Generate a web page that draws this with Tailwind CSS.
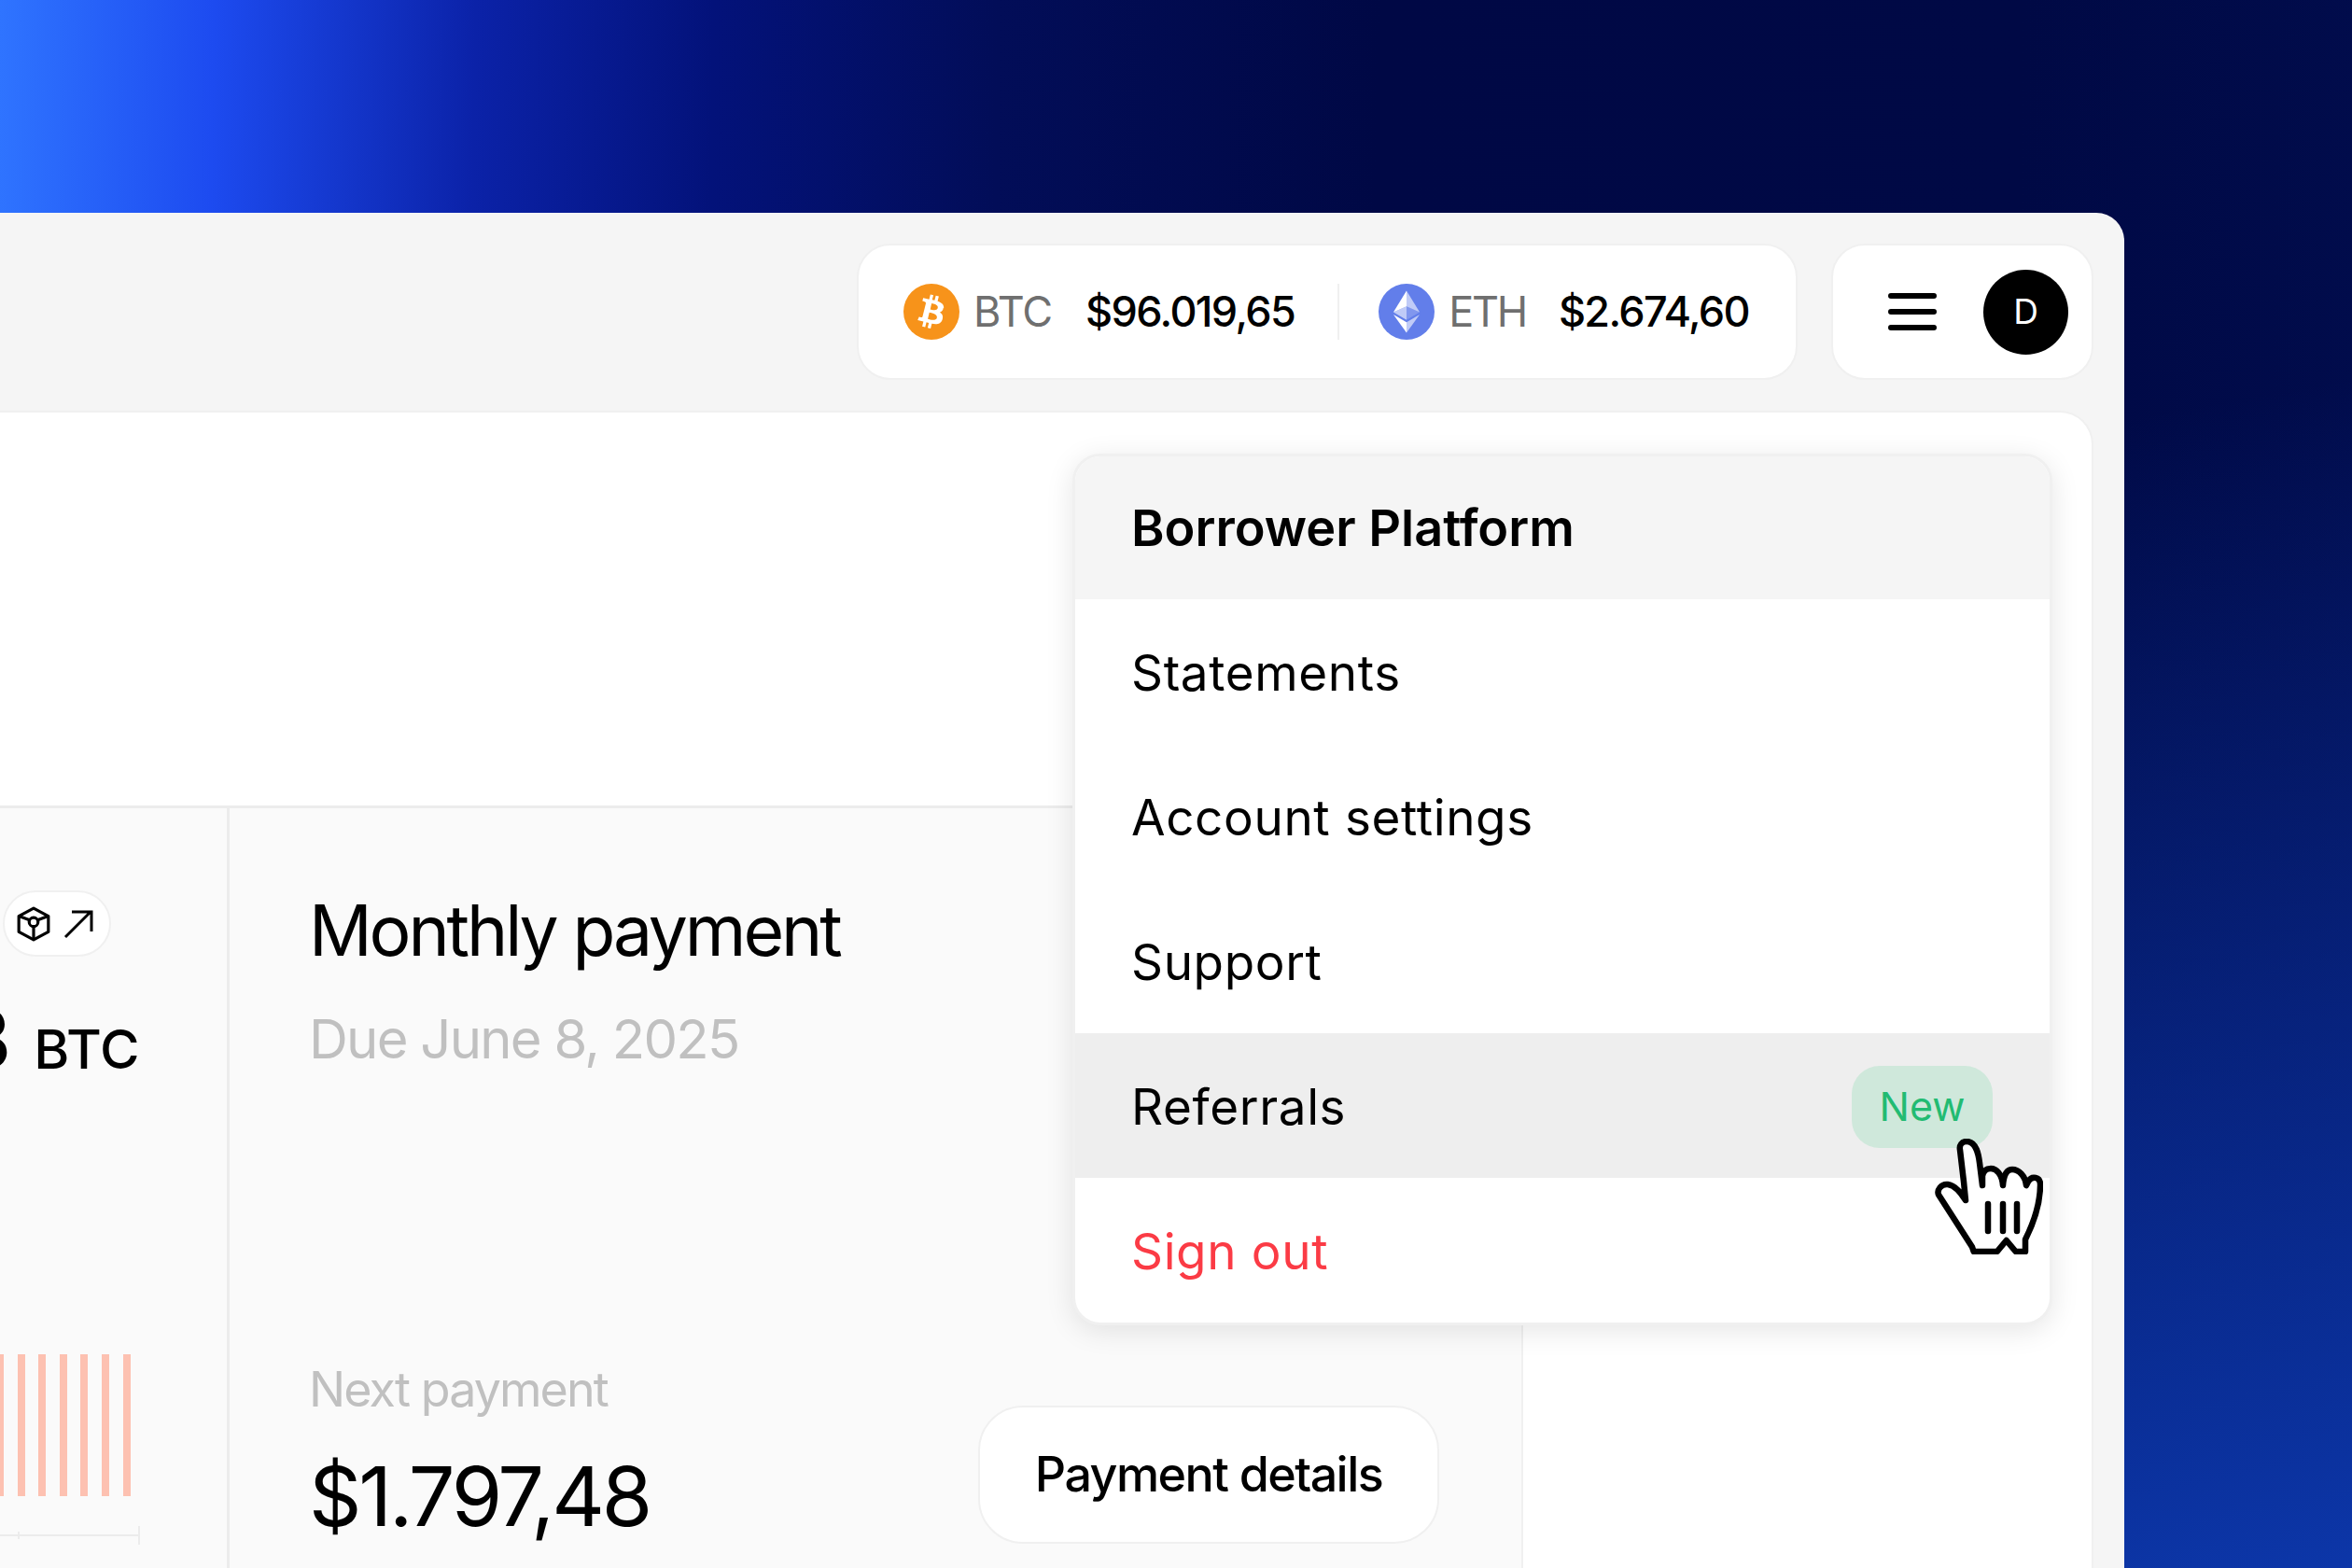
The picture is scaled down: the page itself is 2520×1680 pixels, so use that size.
<!DOCTYPE html>
<html lang="en">
<head>
    <meta charset="UTF-8">
    <title>Borrower Platform</title>
    <script src="https://cdn.jsdelivr.net/npm/@tailwindcss/browser@4"></script>
</head>
<body class="w-[2520px] h-[1680px] overflow-hidden font-['Inter',sans-serif] text-black bg-[#01084a]">
    <div class="relative w-[2520px] h-[1680px] overflow-hidden pt-[228px] bg-[linear-gradient(91deg,#2f74ff_0%,#1d4bf0_9%,#0b22a8_20%,#03127a_30%,#020d58_42%,#000845_58%,#000945_85%,#010c4c_100%)]">
        <div class="absolute inset-0 bg-[linear-gradient(170deg,transparent_40%,#0c36a8_100%)]"></div>

        <!-- app window -->
        <div class="relative w-[2276px] h-[1452px] bg-[#f5f5f5] rounded-tr-[30px] flex flex-col">
            <header class="h-[212px] shrink-0 flex justify-end gap-[36px] pt-[33px] pr-[33px]">
                <div class="h-[146px] w-[1008px] bg-white rounded-[36px] border-2 border-[#f0f0f0] flex items-center pl-[48px] text-[45px] font-[450] tracking-[-0.036em]">
                    <svg class="w-[60px] h-[60px] shrink-0" viewBox="0 0 32 32">
                        <circle cx="16" cy="16" r="16" fill="#f7931a"/>
                        <path fill="#fff" d="M23 14c.3-2.100-1.300-3.200-3.500-4l.7-2.800-1.700-.4-.7 2.700-1.400-.3.7-2.700-1.700-.4-.7 2.800-3.400-.8-.5 1.800s1.300.3 1.200.3c.7.2.8.6.8 1l-1.900 7.600c-.1.2-.3.5-.8.4 0 0-1.200-.3-1.200-.3l-.8 1.900 3.300.8-.7 2.800 1.700.4.7-2.800 1.400.4-.7 2.800 1.700.4.700-2.800c2.900.5 5.100.3 6-2.300.7-2.100 0-3.300-1.500-4.100 1.100-.3 1.900-1 2.100-2.600zm-3.900 5.400c-.5 2.100-4 1-5.200.7l.9-3.700c1.200.3 4.800.9 4.300 3zm.5-5.500c-.5 1.900-3.400.9-4.300.7l.8-3.400c1 .3 4 .7 3.500 2.700z"/>
                    </svg>
                    <span class="ml-[15px] text-[#6f6f6f] font-normal tracking-[-0.025em]">BTC</span>
                    <span class="ml-[36px]">$96.019,65</span>
                    <span class="ml-[46px] w-[2px] h-[60px] bg-[#f0f0f0]"></span>
                    <svg class="ml-[42px] w-[60px] h-[60px] shrink-0" viewBox="0 0 32 32">
                        <circle cx="16" cy="16" r="16" fill="#627eea"/>
                        <path fill="#fff" fill-opacity=".6" d="M16 4v8.900l7.500 3.300z"/>
                        <path fill="#fff" d="M16 4l-7.500 12.200 7.500-3.300z"/>
                        <path fill="#fff" fill-opacity=".6" d="M16 22v6l7.500-10.400z"/>
                        <path fill="#fff" d="M16 28v-6l-7.500-4.400z"/>
                        <path fill="#fff" fill-opacity=".2" d="M16 20.600l7.500-4.400-7.500-3.300z"/>
                        <path fill="#fff" fill-opacity=".6" d="M8.500 16.200l7.500 4.400v-7.700z"/>
                    </svg>
                    <span class="ml-[15px] text-[#6f6f6f] font-normal tracking-[-0.05em]">ETH</span>
                    <span class="ml-[35px]">$2.674,60</span>
                </div>
                <div class="h-[146px] w-[281px] bg-white rounded-[36px] border-2 border-[#f0f0f0] flex items-center justify-end gap-[50px] pr-[25px]">
                    <svg class="w-[52px] h-[40px]" viewBox="0 0 52 40" fill="none" stroke="#000" stroke-width="6" stroke-linecap="round">
                        <path d="M3 3h46M3 20h46M3 37h46"/>
                    </svg>
                    <div class="w-[91px] h-[91px] rounded-full bg-black text-white flex items-center justify-center text-[37px]">D</div>
                </div>
            </header>

            <!-- main card -->
            <main class="relative flex-1 mr-[33px] bg-white rounded-tr-[36px] border-t-2 border-r-2 border-[#f0f0f0] flex flex-col">
                <div class="h-[424px] border-b-[3px] border-[#ececec] w-[1632px]"></div>
                <div class="flex flex-1 w-[1632px] bg-[#fafafa] border-r-2 border-[#f0f0f0]">
                    <!-- collateral column, cut off by the window edge -->
                    <section class="relative w-[246px] shrink-0 border-r-[3px] border-[#ececec]">
                        <div class="absolute top-[88px] left-[3px] w-[116px] h-[71px] rounded-full bg-white border-2 border-[#f0f0f0] flex items-center pl-[12px] gap-[13px]">
                            <svg class="w-[38px] h-[38px]" viewBox="0 0 36 36" fill="none" stroke="#000" stroke-width="3" stroke-linejoin="round">
                                <path d="M18 2l15 8v16l-15 8-15-8V10z"/>
                                <circle cx="18" cy="16" r="4.500"/>
                                <path d="M3 10l11 4M33 10l-11 4M18 20.500V34"/>
                            </svg>
                            <svg class="w-[32px] h-[32px]" viewBox="0 0 32 32" fill="none" stroke="#000" stroke-width="3">
                                <path d="M2 30L29 3M9 3h21v21"/>
                            </svg>
                        </div>
                        <div class="absolute top-[203px] left-[-43px] flex items-baseline gap-[24px] font-medium whitespace-nowrap">
                            <span class="text-[88px] leading-[88px]">3</span>
                            <span class="text-[58px] leading-[88px]">BTC</span>
                        </div>
                        <div class="absolute top-[585px] left-[-4px] flex gap-[14.600px]">
                            <div class="w-[8px] h-[152px] bg-[#fdc1b1]"></div>
                            <div class="w-[8px] h-[152px] bg-[#fdc1b1]"></div>
                            <div class="w-[8px] h-[152px] bg-[#fdc1b1]"></div>
                            <div class="w-[8px] h-[152px] bg-[#fdc1b1]"></div>
                            <div class="w-[8px] h-[152px] bg-[#fdc1b1]"></div>
                            <div class="w-[8px] h-[152px] bg-[#fdc1b1]"></div>
                            <div class="w-[8px] h-[152px] bg-[#fdc1b1]"></div>
                        </div>
                        <div class="absolute top-[778px] left-0 w-[150px] h-[2px] bg-[#ececec]"></div>
                        <div class="absolute top-[775px] left-[19px] w-[2px] h-[8px] bg-[#ececec]"></div>
                        <div class="absolute top-[769px] left-[148px] w-[2px] h-[20px] bg-[#ececec]"></div>
                    </section>
                    <!-- monthly payment -->
                    <section class="relative flex-1 pl-[85px] pt-[91px]">
                        <h1 class="text-[75px] leading-[80px] tracking-[-0.042em]">Monthly payment</h1>
                        <p class="mt-[44px] text-[58px] leading-[64px] tracking-[-0.03em] text-[#c0c0c0]">Due June 8, 2025</p>
                        <p class="mt-[316px] text-[52px] leading-[56px] tracking-[-0.037em] text-[#c0c0c0]">Next payment</p>
                        <p class="mt-[38px] text-[88px] leading-[96px] tracking-[-0.036em]">$1.797,48</p>
                        <button class="absolute left-[802px] top-[640px] w-[494px] h-[148px] rounded-[48px] bg-white border-2 border-[#f0f0f0] text-[52px] font-medium tracking-[-0.03em]">Payment details</button>
                    </section>
                </div>

                <!-- user dropdown -->
                <div class="absolute left-[1149px] top-[44px] w-[1050px] rounded-[30px] bg-white overflow-hidden border-[3px] border-[#f0f0f0] shadow-[0_6px_30px_rgba(0,0,0,0.1)] text-[53px] tracking-[0.012em]">
                    <div class="h-[153px] bg-[#f5f5f5] flex items-center pl-[60px] text-[54px] font-semibold tracking-normal">Borrower Platform</div>
                    <div class="h-[155px] flex items-center pl-[60px] pt-[5px]">Statements</div>
                    <div class="h-[155px] flex items-center pl-[60px] pt-[5px]">Account settings</div>
                    <div class="h-[155px] flex items-center pl-[60px] pt-[5px]">Support</div>
                    <div class="h-[155px] flex items-center justify-between pl-[60px] pr-[61px] pt-[2px] bg-[#eeeeee]">
                        <span class="pt-[3px]">Referrals</span>
                        <span class="w-[151px] h-[88px] rounded-[30px] bg-[#cfe8db] text-[#22bb72] text-[43px] flex items-center justify-center tracking-normal">New</span>
                    </div>
                    <div class="h-[155px] flex items-center pl-[60px] pt-[5px] text-[#fb3b45]">Sign out</div>
                </div>
            </main>
        </div>

        <!-- pointer -->
        <svg class="absolute left-[2073px] top-[1220px] w-[116px] h-[124px]" viewBox="0 0 116 124" fill="#fff" stroke="#000" stroke-width="6.500" stroke-linejoin="round" stroke-linecap="round">
            <path d="M34 3C29 3 26 7 27 12L31 46L33 66C28 58 22 50 14 49C7 48 2 55 4 60L40 116L41.700 121H66.700L76.700 109L86.700 121H97V108C105 92 113 72 113 49C113 41 104 39 100 46L98 50C97 40 90 33 83 33C78 33 74 37 73 50C72 38 66 32 60 32C56 32 52 34 51 40V50L48 26C47 18 45 3 34 3Z"/>
            <path d="M57 70v29M73 70v29M88 70v29" fill="none"/>
        </svg>
    </div>
</body>
</html>
